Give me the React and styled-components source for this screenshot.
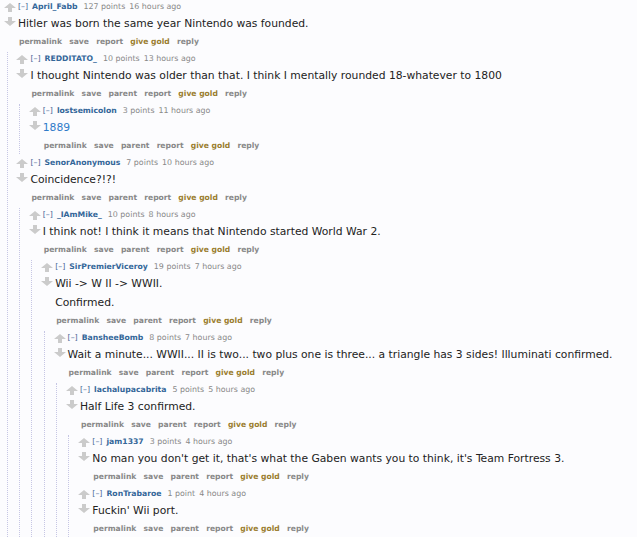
import styled, { createGlobalStyle } from "styled-components";

const GlobalStyle = createGlobalStyle`
  html, body {
    margin: 0;
    padding: 0;
    background: #fcfcfe;
  }
  body {
    font-family: "DejaVu Sans", Verdana, sans-serif;
  }
`;

const Page = styled.div`
  padding: 0 0 0 2px;
  background: #fcfcfe;
  min-height: 537px;
  overflow: hidden;
`;

const CommentWrap = styled.div``;

const Row = styled.div`
  display: flex;
  align-items: flex-start;
  margin-bottom: 2px;
`;

const Midcol = styled.div`
  width: 16px;
  flex: none;
  display: flex;
  flex-direction: column;
  align-items: center;
  padding-top: 3px;
  gap: 5px;
`;

const Entry = styled.div`
  flex: 1;
  min-width: 0;
`;

const Tagline = styled.div`
  height: 14px;
  line-height: 14px;
  font-size: 7.9px;
  color: #888;
  white-space: nowrap;
  display: flex;
  gap: 4px;
`;

const Expand = styled.span`
  color: #4a6896;
`;

const Author = styled.span`
  color: #369;
  font-weight: bold;
  font-size: 7.7px;
  margin-right: 2px;
`;

const Body = styled.div`
  font-size: 10.75px;
  color: #222;
  margin-top: 1px;

  p {
    margin: 0;
    line-height: 18px;
  }
  p + p {
    margin-top: 1px;
  }
  a {
    color: #2f7bc9;
    text-decoration: none;
  }
`;

const Buttons = styled.ul`
  list-style: none;
  margin: 1px 0 0;
  padding: 0 0 0 1px;
  display: flex;
  gap: 7.2px;
  height: 16px;
  line-height: 16px;
`;

const Btn = styled.li`
  font-size: 7.6px;
  font-weight: bold;
  color: ${(p) => (p.$gold ? "#9a7d2e" : "#888")};
`;

const Child = styled.div`
  margin-left: 4.5px;
  border-left: 1px dotted #c6c6e4;
  padding-left: 6.9px;
`;

function Arrow({ down }) {
  return (
    <svg width="12" height="9" viewBox="0 0 12 9">
      <polygon
        points="6,0 12,5 8,5 8,9 4,9 4,5 0,5"
        fill="#cbcbcb"
        transform={down ? "rotate(180 6 4.5)" : undefined}
      />
    </svg>
  );
}

const thread = {
  author: "April_Fabb",
  points: "127 points",
  time: "16 hours ago",
  body: ["Hitler was born the same year Nintendo was founded."],
  root: true,
  replies: [
    {
      author: "REDDITATO_",
      points: "10 points",
      time: "13 hours ago",
      body: [
        "I thought Nintendo was older than that. I think I mentally rounded 18-whatever to 1800",
      ],
      replies: [
        {
          author: "lostsemicolon",
          points: "3 points",
          time: "11 hours ago",
          link: "1889",
          replies: [],
        },
      ],
    },
    {
      author: "SenorAnonymous",
      points: "7 points",
      time: "10 hours ago",
      body: ["Coincidence?!?!"],
      replies: [
        {
          author: "_IAmMike_",
          points: "10 points",
          time: "8 hours ago",
          body: ["I think not! I think it means that Nintendo started World War 2."],
          replies: [
            {
              author: "SirPremierViceroy",
              points: "19 points",
              time: "7 hours ago",
              body: ["Wii -> W II -> WWII.", "Confirmed."],
              replies: [
                {
                  author: "BansheeBomb",
                  points: "8 points",
                  time: "7 hours ago",
                  body: [
                    "Wait a minute... WWII... II is two... two plus one is three... a triangle has 3 sides! Illuminati confirmed.",
                  ],
                  replies: [
                    {
                      author: "lachalupacabrita",
                      points: "5 points",
                      time: "5 hours ago",
                      body: ["Half Life 3 confirmed."],
                      replies: [
                        {
                          author: "jam1337",
                          points: "3 points",
                          time: "4 hours ago",
                          body: [
                            "No man you don't get it, that's what the Gaben wants you to think, it's Team Fortress 3.",
                          ],
                          replies: [],
                        },
                        {
                          author: "RonTrabaroe",
                          points: "1 point",
                          time: "4 hours ago",
                          body: ["Fuckin' Wii port."],
                          replies: [],
                        },
                      ],
                    },
                  ],
                },
              ],
            },
          ],
        },
      ],
    },
  ],
};

function Comment({ c }) {
  const buttons = c.root
    ? ["permalink", "save", "report", "give gold", "reply"]
    : ["permalink", "save", "parent", "report", "give gold", "reply"];

  return (
    <CommentWrap>
      <Row>
        <Midcol>
          <Arrow />
          <Arrow down />
        </Midcol>
        <Entry>
          <Tagline>
            <Expand>[–]</Expand>
            <Author>{c.author}</Author>
            <span>{c.points}</span>
            <span>{c.time}</span>
          </Tagline>
          <Body>
            {c.link ? (
              <p>
                <a href="#">{c.link}</a>
              </p>
            ) : (
              c.body.map((t, i) => <p key={i}>{t}</p>)
            )}
          </Body>
          <Buttons>
            {buttons.map((b) => (
              <Btn key={b} $gold={b === "give gold"}>
                {b}
              </Btn>
            ))}
          </Buttons>
        </Entry>
      </Row>
      {c.replies && c.replies.length > 0 && (
        <Child>
          {c.replies.map((r) => (
            <Comment key={r.author} c={r} />
          ))}
        </Child>
      )}
    </CommentWrap>
  );
}

export default function App() {
  return (
    <>
      <GlobalStyle />
      <Page>
        <Comment c={thread} />
      </Page>
    </>
  );
}
